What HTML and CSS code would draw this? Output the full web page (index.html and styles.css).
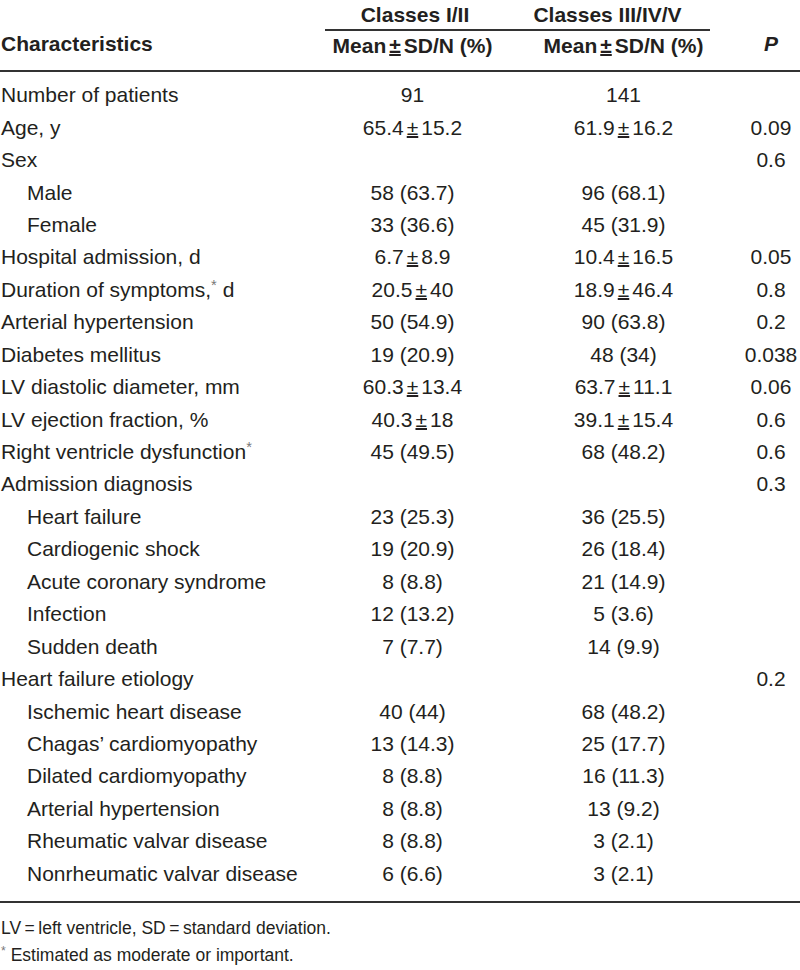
FILE: index.html
```html
<!DOCTYPE html>
<html>
<head>
<meta charset="utf-8">
<link rel="stylesheet" href="styles.css">
</head>
<body>
<div class="wrap">
<table class="tbl">
  <colgroup>
    <col class="c0"><col class="c1"><col class="c2"><col class="c3">
  </colgroup>
  <thead>
    <tr class="h1">
      <th class="lbl" rowspan="2"><div class="lbltext">Characteristics</div></th>
      <th class="grp" colspan="2">
        <div class="grpline">
          <span class="g1">Classes I/II</span>
          <span class="g2">Classes III/IV/V</span>
        </div>
      </th>
      <th class="p" rowspan="2"><div class="lbltext"><i>P</i></div></th>
    </tr>
    <tr class="h2">
      <th class="sub"><div class="subtext">Mean<span class="pm">±</span>SD/N (%)</div></th>
      <th class="sub"><div class="subtext">Mean<span class="pm">±</span>SD/N (%)</div></th>
    </tr>
  </thead>
  <tbody>
    <tr class="first"><td>Number of patients</td><td>91</td><td>141</td><td></td></tr>
    <tr><td>Age, y</td><td>65.4<span class="pm">±</span>15.2</td><td>61.9<span class="pm">±</span>16.2</td><td>0.09</td></tr>
    <tr><td>Sex</td><td></td><td></td><td>0.6</td></tr>
    <tr><td class="ind">Male</td><td>58 (63.7)</td><td>96 (68.1)</td><td></td></tr>
    <tr><td class="ind">Female</td><td>33 (36.6)</td><td>45 (31.9)</td><td></td></tr>
    <tr><td>Hospital admission, d</td><td>6.7<span class="pm">±</span>8.9</td><td>10.4<span class="pm">±</span>16.5</td><td>0.05</td></tr>
    <tr><td>Duration of symptoms,<sup>*</sup> d</td><td>20.5<span class="pm">±</span>40</td><td>18.9<span class="pm">±</span>46.4</td><td>0.8</td></tr>
    <tr><td>Arterial hypertension</td><td>50 (54.9)</td><td>90 (63.8)</td><td>0.2</td></tr>
    <tr><td>Diabetes mellitus</td><td>19 (20.9)</td><td>48 (34)</td><td>0.038</td></tr>
    <tr><td>LV diastolic diameter, mm</td><td>60.3<span class="pm">±</span>13.4</td><td>63.7<span class="pm">±</span>11.1</td><td>0.06</td></tr>
    <tr><td>LV ejection fraction, %</td><td>40.3<span class="pm">±</span>18</td><td>39.1<span class="pm">±</span>15.4</td><td>0.6</td></tr>
    <tr><td>Right ventricle dysfunction<sup>*</sup></td><td>45 (49.5)</td><td>68 (48.2)</td><td>0.6</td></tr>
    <tr><td>Admission diagnosis</td><td></td><td></td><td>0.3</td></tr>
    <tr><td class="ind">Heart failure</td><td>23 (25.3)</td><td>36 (25.5)</td><td></td></tr>
    <tr><td class="ind">Cardiogenic shock</td><td>19 (20.9)</td><td>26 (18.4)</td><td></td></tr>
    <tr><td class="ind">Acute coronary syndrome</td><td>8 (8.8)</td><td>21 (14.9)</td><td></td></tr>
    <tr><td class="ind">Infection</td><td>12 (13.2)</td><td>5 (3.6)</td><td></td></tr>
    <tr><td class="ind">Sudden death</td><td>7 (7.7)</td><td>14 (9.9)</td><td></td></tr>
    <tr><td>Heart failure etiology</td><td></td><td></td><td>0.2</td></tr>
    <tr><td class="ind">Ischemic heart disease</td><td>40 (44)</td><td>68 (48.2)</td><td></td></tr>
    <tr><td class="ind">Chagas’ cardiomyopathy</td><td>13 (14.3)</td><td>25 (17.7)</td><td></td></tr>
    <tr><td class="ind">Dilated cardiomyopathy</td><td>8 (8.8)</td><td>16 (11.3)</td><td></td></tr>
    <tr><td class="ind">Arterial hypertension</td><td>8 (8.8)</td><td>13 (9.2)</td><td></td></tr>
    <tr><td class="ind">Rheumatic valvar disease</td><td>8 (8.8)</td><td>3 (2.1)</td><td></td></tr>
    <tr class="last"><td class="ind">Nonrheumatic valvar disease</td><td>6 (6.6)</td><td>3 (2.1)</td><td></td></tr>
  </tbody>
</table>
<div class="notes">
  <p>LV<span class="eq">=</span>left ventricle, SD<span class="eq">=</span>standard deviation.</p>
  <p><sup>*</sup> Estimated as moderate or important.</p>
</div>
</div>
</body>
</html>
```
FILE: styles.css
```css
html, body {
  margin: 0;
  padding: 0;
  background: #ffffff;
}
body {
  font-family: "Liberation Sans", Arial, sans-serif;
  color: #231f20;
  font-size: 21px;
}
.wrap {
  width: 800px;
}
.tbl {
  width: 800px;
  border-collapse: collapse;
  table-layout: fixed;
}
.c0 { width: 320px; }
.c1 { width: 185px; }
.c2 { width: 237px; }
.c3 { width: 58px; }
th {
  font-weight: bold;
  padding: 0;
}
thead tr.h2 th, thead th.lbl, thead th.p {
  border-bottom: 2px solid #333;
}
th.lbl {
  text-align: left;
  vertical-align: bottom;
  padding-left: 1px;
}
th.p {
  vertical-align: bottom;
  text-align: center;
}
.lbltext {
  line-height: 26px;
  margin-bottom: 13px;
}
th.grp {
  vertical-align: top;
}
.grpline {
  display: flex;
  align-items: center;
  margin: 0 32px 0 5px;
  height: 29px;
  border-bottom: 2px solid #333;
}
.g1 { width: 180px; text-align: center; }
.g2 { flex: 1; text-align: center; }
th.sub {
  text-align: center;
  vertical-align: top;
}
.subtext {
  height: 39px;
  line-height: 30px;
}
.pm {
  display: inline-block;
  margin: 0 3px;
  text-decoration: underline;
  text-underline-offset: 1px;
}
td {
  padding: 0;
  height: 32.45px;
  text-align: center;
  white-space: nowrap;
}
td:first-child {
  text-align: left;
  padding-left: 1px;
}
td.ind {
  padding-left: 27px;
}
tr.first td { padding-top: 7px; }
tr.last td {
  padding-bottom: 11px;
  border-bottom: 2px solid #333;
}
sup {
  font-size: 0.7em;
  line-height: 0;
  vertical-align: 0.5em;
  color: #777;
}
.notes {
  font-size: 17.5px;
  padding: 12px 0 0 1px;
}
.notes p {
  margin: 0;
  line-height: 27px;
}
.eq {
  margin: 0 3.5px;
}
```
